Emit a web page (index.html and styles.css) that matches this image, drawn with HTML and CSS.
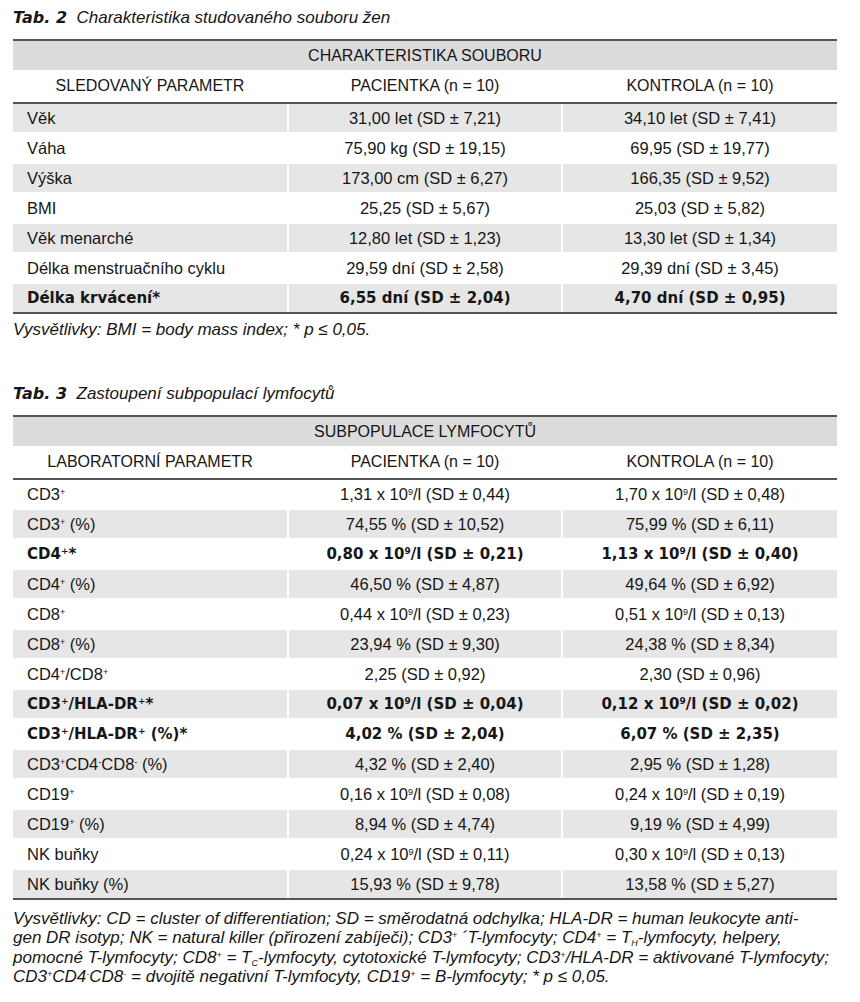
FILE: index.html
```html
<!DOCTYPE html>
<html lang="cs">
<head>
<meta charset="utf-8">
<title>Tabulky</title>
<link rel="stylesheet" href="styles.css">
</head>
<body>
<div class="page">
  <p class="title"><b>Tab. 2</b>&nbsp; Charakteristika studovaného souboru žen</p>
  <div class="tbl">
    <div class="cap">CHARAKTERISTIKA SOUBORU</div>
    <div class="row head">
      <div class="c">SLEDOVANÝ PARAMETR</div>
      <div class="c">PACIENTKA (n = 10)</div>
      <div class="c">KONTROLA (n = 10)</div>
    </div>
    <div class="body">
      <div class="row g"><div class="l">Věk</div><div class="c">31,00 let (SD ± 7,21)</div><div class="c">34,10 let (SD ± 7,41)</div></div>
      <div class="row"><div class="l">Váha</div><div class="c">75,90 kg (SD ± 19,15)</div><div class="c">69,95 (SD ± 19,77)</div></div>
      <div class="row g"><div class="l">Výška</div><div class="c">173,00 cm (SD ± 6,27)</div><div class="c">166,35 (SD ± 9,52)</div></div>
      <div class="row"><div class="l">BMI</div><div class="c">25,25 (SD ± 5,67)</div><div class="c">25,03 (SD ± 5,82)</div></div>
      <div class="row g"><div class="l">Věk menarché</div><div class="c">12,80 let (SD ± 1,23)</div><div class="c">13,30 let (SD ± 1,34)</div></div>
      <div class="row"><div class="l">Délka menstruačního cyklu</div><div class="c">29,59 dní (SD ± 2,58)</div><div class="c">29,39 dní (SD ± 3,45)</div></div>
      <div class="row g b"><div class="l">Délka krvácení*</div><div class="c">6,55 dní (SD ± 2,04)</div><div class="c">4,70 dní (SD ± 0,95)</div></div>
    </div>
  </div>
  <p class="note note1">Vysvětlivky: BMI = body mass index; * p ≤ 0,05.</p>

  <p class="title title2"><b>Tab. 3</b>&nbsp; Zastoupení subpopulací lymfocytů</p>
  <div class="tbl">
    <div class="cap">SUBPOPULACE LYMFOCYTŮ</div>
    <div class="row head">
      <div class="c">LABORATORNÍ PARAMETR</div>
      <div class="c">PACIENTKA (n = 10)</div>
      <div class="c">KONTROLA (n = 10)</div>
    </div>
    <div class="body">
      <div class="row"><div class="l">CD3<sup>+</sup></div><div class="c">1,31 x 10<sup>9</sup>/l (SD ± 0,44)</div><div class="c">1,70 x 10<sup>9</sup>/l (SD ± 0,48)</div></div>
      <div class="row g"><div class="l">CD3<sup>+</sup> (%)</div><div class="c">74,55 % (SD ± 10,52)</div><div class="c">75,99 % (SD ± 6,11)</div></div>
      <div class="row b"><div class="l">CD4<sup>+</sup>*</div><div class="c">0,80 x 10<sup>9</sup>/l (SD ± 0,21)</div><div class="c">1,13 x 10<sup>9</sup>/l (SD ± 0,40)</div></div>
      <div class="row g"><div class="l">CD4<sup>+</sup> (%)</div><div class="c">46,50 % (SD ± 4,87)</div><div class="c">49,64 % (SD ± 6,92)</div></div>
      <div class="row"><div class="l">CD8<sup>+</sup></div><div class="c">0,44 x 10<sup>9</sup>/l (SD ± 0,23)</div><div class="c">0,51 x 10<sup>9</sup>/l (SD ± 0,13)</div></div>
      <div class="row g"><div class="l">CD8<sup>+</sup> (%)</div><div class="c">23,94 % (SD ± 9,30)</div><div class="c">24,38 % (SD ± 8,34)</div></div>
      <div class="row"><div class="l">CD4<sup>+</sup>/CD8<sup>+</sup></div><div class="c">2,25 (SD ± 0,92)</div><div class="c">2,30 (SD ± 0,96)</div></div>
      <div class="row g b"><div class="l">CD3<sup>+</sup>/HLA-DR<sup>+</sup>*</div><div class="c">0,07 x 10<sup>9</sup>/l (SD ± 0,04)</div><div class="c">0,12 x 10<sup>9</sup>/l (SD ± 0,02)</div></div>
      <div class="row b"><div class="l">CD3<sup>+</sup>/HLA-DR<sup>+</sup> (%)*</div><div class="c">4,02 % (SD ± 2,04)</div><div class="c">6,07 % (SD ± 2,35)</div></div>
      <div class="row g"><div class="l">CD3<sup>+</sup>CD4<sup>-</sup>CD8<sup>-</sup> (%)</div><div class="c">4,32 % (SD ± 2,40)</div><div class="c">2,95 % (SD ± 1,28)</div></div>
      <div class="row"><div class="l">CD19<sup>+</sup></div><div class="c">0,16 x 10<sup>9</sup>/l (SD ± 0,08)</div><div class="c">0,24 x 10<sup>9</sup>/l (SD ± 0,19)</div></div>
      <div class="row g"><div class="l">CD19<sup>+</sup> (%)</div><div class="c">8,94 % (SD ± 4,74)</div><div class="c">9,19 % (SD ± 4,99)</div></div>
      <div class="row"><div class="l">NK buňky</div><div class="c">0,24 x 10<sup>9</sup>/l (SD ± 0,11)</div><div class="c">0,30 x 10<sup>9</sup>/l (SD ± 0,13)</div></div>
      <div class="row g"><div class="l">NK buňky (%)</div><div class="c">15,93 % (SD ± 9,78)</div><div class="c">13,58 % (SD ± 5,27)</div></div>
    </div>
  </div>
  <p class="note note2">Vysvětlivky: CD = cluster of differentiation; SD = směrodatná odchylka; HLA-DR = human leukocyte anti-<br>gen DR isotyp; NK = natural killer (přirození zabíječi); CD3<sup>+</sup> ´T-lymfocyty; CD4<sup>+</sup> = T<sub>H</sub>-lymfocyty, helpery,<br>pomocné T-lymfocyty; CD8<sup>+</sup> = T<sub>C</sub>-lymfocyty, cytotoxické T-lymfocyty; CD3<sup>+</sup>/HLA-DR = aktivované T-lymfocyty;<br>CD3<sup>+</sup>CD4<sup>-</sup>CD8<sup>-</sup> = dvojitě negativní T-lymfocyty, CD19<sup>+</sup> = B-lymfocyty; * p ≤ 0,05.</p>
</div>
</body>
</html>
```

FILE: styles.css
```css
html, body {
  margin: 0;
  padding: 0;
  background: #ffffff;
}

.page {
  padding: 8px 0 0 13px;
  width: 824px;
  font-family: "Liberation Sans", Arial, sans-serif;
  font-size: 16px;
  color: #161616;
}

.title {
  margin: 0 0 12px 0;
  line-height: 19px;
  font-style: italic;
  font-size: 17px;
}

.title b {
  font-family: "DejaVu Sans", "Liberation Sans", sans-serif;
  font-weight: 700;
  font-size: 16px;
}

.title2 {
  margin-top: 44px;
}

.tbl {
  display: flex;
  flex-direction: column;
}

.cap {
  border-top: 2px solid #555555;
  background: #dcdcdc;
  height: 29px;
  line-height: 30px;
  text-align: center;
  font-size: 16px;
}

.row {
  display: grid;
  grid-template-columns: 274px 272px 274px;
  column-gap: 2px;
  height: 28px;
  line-height: 28px;
  font-size: 16.5px;
}

.row.head {
  height: 32px;
  line-height: 32px;
  font-size: 16px;
  border-bottom: 2px solid #555555;
}

.body {
  display: flex;
  flex-direction: column;
  gap: 2px;
  border-bottom: 2px solid #555555;
}

.row.g > div {
  background: #e6e6e6;
}

.row.b {
  font-family: "DejaVu Sans", "Liberation Sans", sans-serif;
  font-weight: 700;
  font-size: 15px;
}

.l {
  padding-left: 14px;
  white-space: nowrap;
}

.c {
  text-align: center;
  white-space: nowrap;
}

sup {
  font-size: 9px;
  line-height: 0;
  vertical-align: 5px;
}

sub {
  font-size: 9px;
  line-height: 0;
  vertical-align: -3px;
}

.note {
  margin: 0;
  font-style: italic;
  font-size: 17px;
  line-height: 19.5px;
  white-space: nowrap;
}

.note1 {
  margin-top: 6px;
}

.note2 {
  margin-top: 9px;
}
```
